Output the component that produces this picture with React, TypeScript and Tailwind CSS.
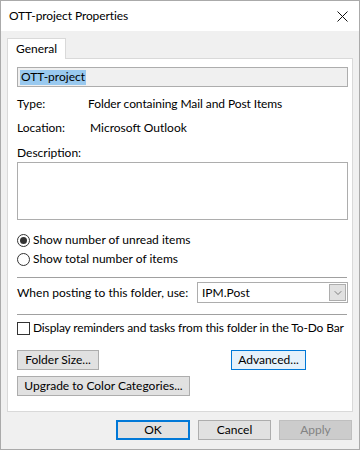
import { ChevronDown } from 'lucide-react';

const font = { fontFamily: 'Lato, "Noto Sans", sans-serif' };

type Variant = 'normal' | 'hot' | 'default' | 'disabled';

const variants: Record<Variant, string> = {
  normal: 'border border-[#adadad] bg-[#e1e1e1] text-black',
  hot: 'border border-[#0078d7] bg-[#e5f1fb] text-black',
  default: 'border-2 border-[#0078d7] bg-[#e1e1e1] text-black',
  disabled: 'border border-[#bfbfbf] bg-[#cccccc] text-[#838383]',
};

function Btn({
  children,
  className = '',
  variant = 'normal',
}: {
  children: React.ReactNode;
  className?: string;
  variant?: Variant;
}) {
  return (
    <div className={`h-[20px] flex items-center justify-center text-[12px] ${variants[variant]} ${className}`}>
      {children}
    </div>
  );
}

export default function App() {
  return (
    <div
      className="w-[360px] h-[450px] border border-[#aaaaaa] bg-[#f0f0f0] flex flex-col text-[12px] text-black leading-none whitespace-nowrap"
      style={font}
    >
      {/* title bar */}
      <div className="h-[30px] bg-white flex items-center justify-between pl-[8px] pr-[11px] shrink-0">
        <span className="text-[12px] tracking-[-0.1px]">OTT-project Properties</span>
        <svg width="11" height="11" viewBox="0 0 11 11">
          <path d="M0.5 0.5 L10.5 10.5 M10.5 0.5 L0.5 10.5" stroke="#111" strokeWidth="1" />
        </svg>
      </div>

      {/* tabs */}
      <div className="pl-[6px] pt-[7px] flex">
        <div className="h-[21px] px-[8px] flex items-center bg-white border border-[#d9d9d9] border-b-0 relative z-10 -mb-px">
          General
        </div>
      </div>

      {/* panel */}
      <div className="mx-[6px] h-[354px] bg-white border border-[#d9d9d9] pl-[9px] pr-[4px] pt-[8px] flex flex-col">
        <div className="h-[20px] border border-[#adadad] bg-[#f0f0f0] flex items-center pl-[2px]">
          <span className="bg-[#99c9ef] h-[15px] px-[1px] flex items-center">OTT-project</span>
        </div>

        <div className="flex items-center h-[16px] mt-[9px]">
          <span className="w-[71px]">Type:</span>
          <span className="tracking-[-0.08px]">Folder containing Mail and Post Items</span>
        </div>
        <div className="flex items-center h-[16px] mt-[8px]">
          <span className="w-[73px]">Location:</span>
          <span>Microsoft Outlook</span>
        </div>
        <div className="flex items-center h-[16px] mt-[9px]">Description:</div>
        <div className="h-[58px] border border-[#adadad] mt-[1px]" />

        <div className="flex items-center gap-[3px] h-[16px] mt-[12px]">
          <span className="w-[13px] h-[13px] rounded-full border border-[#333] flex items-center justify-center">
            <span className="w-[7px] h-[7px] rounded-full bg-[#333]" />
          </span>
          <span>Show number of unread items</span>
        </div>
        <div className="flex items-center gap-[3px] h-[16px] mt-[3px]">
          <span className="w-[13px] h-[13px] rounded-full border border-[#333]" />
          <span>Show total number of items</span>
        </div>

        <div className="h-px bg-[#a0a0a0] mt-[10px] mr-[1px]" />

        <div className="flex items-center mt-[4px] h-[21px]">
          <span className="w-[180px] shrink-0">When posting to this folder, use:</span>
          <div className="flex-1 h-[21px] border border-[#adadad] flex items-center justify-between pl-[4px] pr-[1px]">
            <span>IPM.Post</span>
            <span className="w-[17px] h-[17px] border border-[#adadad] bg-[#e1e1e1] flex items-center justify-center">
              <ChevronDown size={12} strokeWidth={1.25} color="#444" />
            </span>
          </div>
        </div>

        <div className="h-px bg-[#a0a0a0] mt-[11px] mr-[1px]" />

        <div className="flex items-center gap-[3px] h-[16px] mt-[5px]">
          <span className="w-[13px] h-[13px] border border-[#333] shrink-0" />
          <span className="tracking-[-0.15px]">Display reminders and tasks from this folder in the To-Do Bar</span>
        </div>

        <div className="flex mt-[14px]">
          <Btn className="w-[82px]">Folder Size...</Btn>
          <Btn className="w-[75px] ml-[132px]" variant="hot">
            Advanced...
          </Btn>
        </div>
        <Btn className="w-[173px] mt-[6px]">Upgrade to Color Categories...</Btn>
      </div>

      {/* footer buttons */}
      <div className="flex justify-end gap-[8px] pr-[7px] mt-[8px]">
        <Btn className="w-[74px]" variant="default">
          OK
        </Btn>
        <Btn className="w-[73px]">Cancel</Btn>
        <Btn className="w-[73px]" variant="disabled">
          Apply
        </Btn>
      </div>
    </div>
  );
}
